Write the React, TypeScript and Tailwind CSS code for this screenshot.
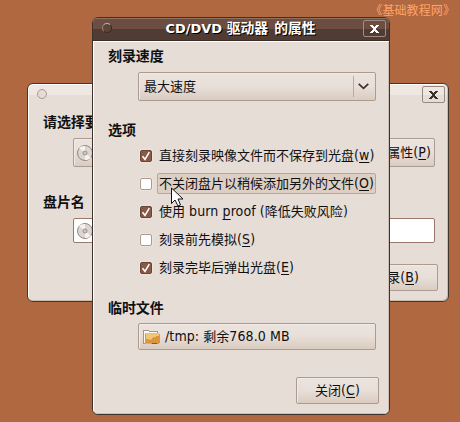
import type { ReactNode } from 'react';

const cjk = "font-['Noto_Sans_CJK_SC',sans-serif]";

function L({ children }: { children: ReactNode }) {
  return <span className="whitespace-pre font-['DejaVu_Sans_Condensed','DejaVu_Sans',sans-serif] text-[14px] tracking-[0.1px] font-stretch-condensed">{children}</span>;
}

function Key({ k }: { k: string }) {
  return (
    <L>
      (<span className="underline decoration-1 underline-offset-2">{k}</span>)
    </L>
  );
}

function Heading({ children }: { children: ReactNode }) {
  return <h2 className={`h-5 text-[14px] leading-[18px] font-bold tracking-[-0.1px] ${cjk}`}>{children}</h2>;
}

const raised =
  'rounded-[2px] border border-[#ac9b90] bg-linear-to-b from-[#ebe3dd] via-[#e8dfd9] to-[#dacbbe] shadow-[inset_1px_1px_0_#f0e9e4]';

function CloseIcon() {
  return (
    <svg width="9" height="8" viewBox="0 0 9 8" shapeRendering="crispEdges" fill="currentColor">
      <path d="M0 0h3v1h1v1h1v-1h1v-1h3v1h-1v1h-1v1h-1v2h1v1h1v1h1v1h-3v-1h-1v-1h-1v1h-1v1h-3v-1h1v-1h1v-1h1v-2h-1v-1h-1v-1h-1z" />
    </svg>
  );
}

function Disc() {
  return (
    <svg width="18" height="18" viewBox="0 0 18 18" className="shrink-0">
      <circle cx="9" cy="9" r="7.5" fill="#ddd5d0" stroke="#94877f" />
      <path d="M9 9 3 4A8 8 0 0 1 9 2ZM9 9l6 5a8 8 0 0 1-6 2Z" fill="#f6f2f0" />
      <circle cx="9" cy="9" r="2" fill="#eee8e5" stroke="#94877f" />
      <circle cx="9" cy="9" r=".7" fill="#94877f" />
    </svg>
  );
}

function Check({ on }: { on: boolean }) {
  return (
    <span
      className={`mt-[2px] size-3 shrink-0 rounded-[2px] border ${
        on ? 'border-[#654638] bg-[#895943]' : 'border-[#ac9b90] bg-white'
      } shadow-[0_0_0_1px_#ece3dd]`}
    >
      {on && (
        <svg width="10" height="10" viewBox="0 0 10 10" fill="none" stroke="#fff">
          <path d="M1.5 5.2 4 8.3 8.3 1.2" strokeWidth="1.6" />
        </svg>
      )}
    </span>
  );
}

function Option({ on, focus, children }: { on: boolean; focus?: boolean; children: ReactNode }) {
  return (
    <label className="flex h-7 items-center gap-[5px]">
      <Check on={on} />
      <span
        className={`flex h-[21px] items-center rounded-[2px] border pb-px pl-px ${
          focus ? 'w-[219px] border-[#cb9f88] bg-[#decfc4]' : 'border-transparent'
        }`}
      >
        {children}
      </span>
    </label>
  );
}

function BackWindow() {
  return (
    <section className="absolute top-[83px] left-[27px] flex h-[219px] w-[422px] flex-col rounded-[6px] border border-[#42362f] bg-[#e6ddd7] shadow-[inset_1px_1px_0_#fff,inset_-1px_-1px_0_#c9bbb0]">
      <header className="mx-px mt-px flex h-[19px] items-center justify-between rounded-t-[5px] bg-linear-to-b from-[#eee7e2] from-50% to-[#e6ddd7] to-50% pr-[2px] pl-2">
        <span className="mb-px size-[10px] rounded-full border border-[#aa9b91] bg-[#e6dcd5]" />
        <button className="flex h-[17px] w-[23px] items-center justify-center rounded-[2px] border border-[#988980] text-[#3e302a]">
          <CloseIcon />
        </button>
      </header>
      <div className="flex flex-col pt-2 pr-[13px] pl-[15px]">
        <Heading>请选择要</Heading>
        <div className={`mt-[6px] ml-[30px] flex h-[29px] items-center justify-between pr-[3px] pl-[2px] ${raised}`}>
          <Disc />
          <span className="flex items-center pb-px">
            属性
            <Key k="P" />
          </span>
        </div>
        <div className="mt-[25px]">
          <Heading>盘片名</Heading>
        </div>
        <div className="mt-[6px] ml-[30px] flex h-[25px] items-center rounded-[2px] border border-[#9c786a] bg-white pl-[2px]">
          <Disc />
        </div>
        <button className={`mt-[21px] -mr-[3px] flex h-[27px] w-[85px] items-center justify-end self-end pr-[18px] pb-px ${raised}`}>
          刻录
          <Key k="B" />
        </button>
      </div>
    </section>
  );
}

function Folder() {
  return (
    <svg width="17" height="16" viewBox="0 0 17 16" shapeRendering="crispEdges">
      <path d="M.5 14.5V1.5h5l1 1h8v12z" fill="#fcfaf7" stroke="#a29489" />
      <path d="M2 5h15v8l-2 2H2z" fill="#dc953c" />
      <path d="M2 4h14v1H2z" fill="#ffb577" />
      <path d="M3 5h13v2l-6 1-2 2H3z" fill="#f0c875" />
      <path d="M5 10h4v1H4zM2 14h6v1H2z" fill="#eda956" />
      <path d="M9 14h5v1H8z" fill="#a74b20" />
    </svg>
  );
}

function FrontWindow() {
  return (
    <section className="absolute top-[17px] left-[92px] flex h-[398px] w-[298px] flex-col overflow-hidden rounded-[6px] border border-[#3d312b] bg-[#e6ddd7]">
      <header className="flex h-[23px] shrink-0 items-center border-b border-[#392b25] bg-linear-to-b from-[#6b4e41] from-50% to-[#513c33] to-50% pr-[3px] pl-[9px] shadow-[inset_0_1px_0_#8b7264]">
        <span className="mb-[2px] size-[10px] rounded-full border border-[#372923] border-t-[#c6b1a5] border-l-[#9f887c] bg-[#5c443a]" />
        <h1 className="flex grow items-baseline justify-center pb-[3px] pl-[6px] text-[13.8px] font-bold whitespace-pre text-white [text-shadow:1px_1px_0_#000]">
          <span className="font-['DejaVu_Sans',sans-serif] text-[13px]">CD/DVD </span>
          <span className="[word-spacing:3px]">驱动器 的属性</span>
        </h1>
        <button className="mb-px flex h-[17px] w-[23px] items-center justify-center rounded-[2px] border border-[#a08c82] text-white">
          <CloseIcon />
        </button>
      </header>
      <div className="flex grow flex-col pt-[5px] pr-[13px] pl-[15px] shadow-[inset_1px_1px_0_#fff,inset_-1px_-1px_0_#cdc0b6]">
        <Heading>刻录速度</Heading>
        <div className={`mt-[6px] ml-[30px] flex h-[29px] w-[238px] items-center pr-[6px] pl-[5px] ${raised}`}>
          <span className="grow pb-[2px]">最大速度</span>
          <span className="mr-[4px] h-[21px] w-px bg-[#b9a99e]" />
          <svg width="11" height="7" viewBox="0 0 11 7" fill="none" stroke="#403029" strokeWidth="1.7">
            <path d="m.7.8 4.8 4.6L10.3.8" />
          </svg>
        </div>
        <div className="mt-[19px]">
          <Heading>选项</Heading>
        </div>
        <div className="mt-[1px] ml-[32px]">
          <Option on>
            直接刻录映像文件而不保存到光盘
            <Key k="w" />
          </Option>
          <Option on={false} focus>
            不关闭盘片以稍候添加另外的文件
            <Key k="O" />
          </Option>
          <Option on>
            使用
            <L>
              {' burn '}
              <span className="underline decoration-1 underline-offset-[3px]">p</span>
              {'roof ('}
            </L>
            降低失败风险
            <L>)</L>
          </Option>
          <Option on={false}>
            刻录前先模拟
            <Key k="S" />
          </Option>
          <Option on>
            刻录完毕后弹出光盘
            <Key k="E" />
          </Option>
        </div>
        <div className="mt-[17px]">
          <Heading>临时文件</Heading>
        </div>
        <div className={`mt-[5px] ml-[30px] flex h-[27px] w-[238px] items-center pl-1 ${raised}`}>
          <Folder />
          <span className="flex items-center pb-px pl-[5px]">
            <L>{'/tmp: '}</L>
            剩余
            <L>768.0 MB</L>
          </span>
        </div>
        <button className={`mt-[27px] -mr-[3px] flex h-[27px] w-[83px] items-center justify-center self-end pb-px ${raised}`}>
          关闭
          <Key k="C" />
        </button>
      </div>
    </section>
  );
}

export default function App() {
  return (
    <main className={`relative h-[422px] w-[460px] overflow-hidden bg-[#b06841] text-[13px] leading-[18px] whitespace-nowrap text-[#101010] ${cjk}`}>
      <p className="pt-px pr-[5px] text-right text-[12px] tracking-[0.1px] text-[#ffa366]">《基础教程网》</p>
      <BackWindow />
      <FrontWindow />
      <svg className="absolute top-[187px] left-[171px]" width="13" height="20" viewBox="0 0 13 20">
        <path d="M.5 1v15.5l3.5-3.5 3 6 2.5-1-2.5-6h5z" fill="#fff" stroke="#111" />
      </svg>
    </main>
  );
}
